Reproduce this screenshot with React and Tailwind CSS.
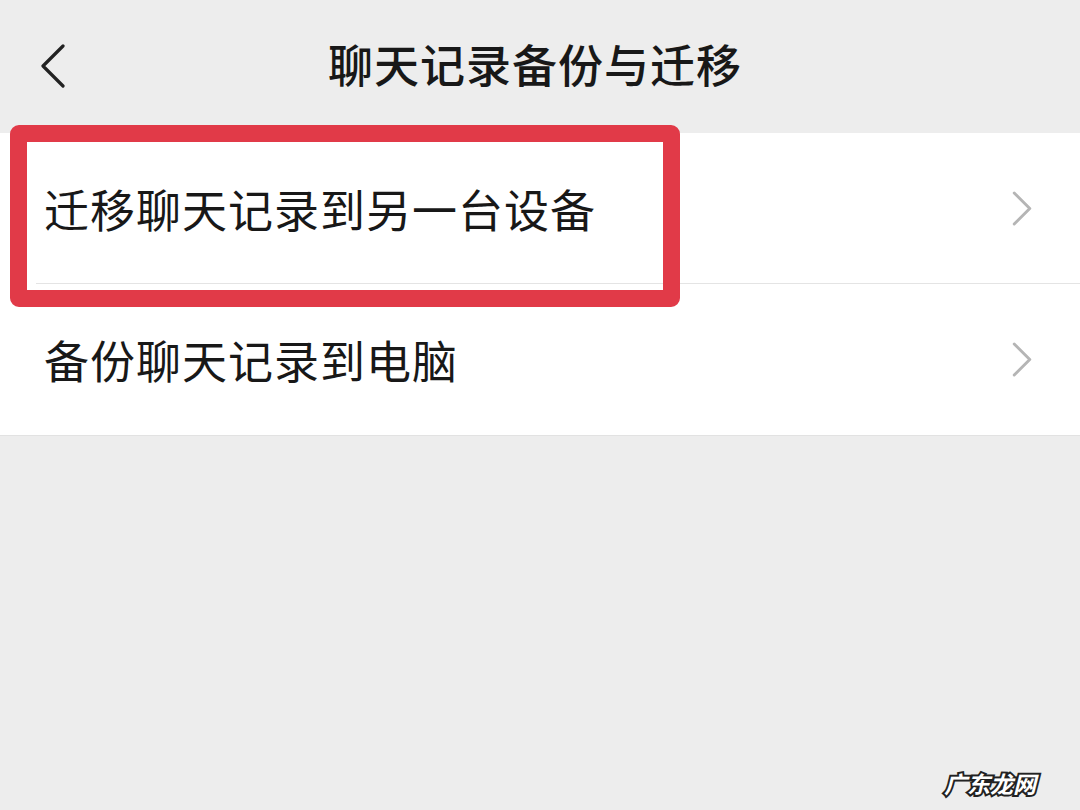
import React from 'react';

const font = { fontFamily: '"Noto Sans CJK SC", "Noto Sans", sans-serif' };

const rows = ['迁移聊天记录到另一台设备', '备份聊天记录到电脑'];

const Chevron = ({ className, color, width = 3 }) => (
    <svg viewBox="0 0 20 36" className={className} fill="none" stroke={color} strokeWidth={width} strokeLinecap="round" strokeLinejoin="round">
        <path d="M2 2 L18 18 L2 34" />
    </svg>
);

export default function App() {
    return (
        <div className="relative w-[1080px] h-[810px] bg-[#ededed] overflow-hidden text-[#181818]" style={font}>
            {/* Header */}
            <div className="h-[133px] grid grid-cols-[1fr_auto_1fr] items-center pb-[6px]">
                <div className="pl-[40px] pt-[4px]">
                    <svg viewBox="0 0 26 44" className="w-[26px] h-[44px]" fill="none" stroke="#222" strokeWidth="3.2" strokeLinecap="round" strokeLinejoin="round">
                        <path d="M23 2 L3 22 L23 42" />
                    </svg>
                </div>
                <h1 className="text-[45px] font-medium leading-none tracking-[1px] -ml-[10px]">聊天记录备份与迁移</h1>
                <div />
            </div>

            {/* List */}
            <div className="bg-white border-b border-[#e2e2e2]">
                {rows.map((label, i) => (
                    <div key={label} className="relative h-[151px] flex items-center pl-[44px] pr-[48px]">
                        <span className="flex-1 text-[45px] leading-none tracking-[1px]">{label}</span>
                        <Chevron className="w-[20px] h-[35px]" color="#b5b5b5" width={3} />
                        {i === 0 && <div className="absolute left-[36px] right-0 bottom-0 h-px bg-[#e4e4e4]" />}
                    </div>
                ))}
            </div>

            {/* Red annotation box */}
            <div className="absolute left-[10px] top-[125px] w-[670px] h-[182px] border-[17px] border-[#e13a48] rounded-[9px]" />

            {/* Watermark */}
            <div
                className="absolute left-[944px] top-[766px] text-[23px] font-bold italic text-white"
                style={{ WebkitTextStroke: '4px #222', paintOrder: 'stroke fill' }}
            >
                广东龙网
            </div>
        </div>
    );
}
